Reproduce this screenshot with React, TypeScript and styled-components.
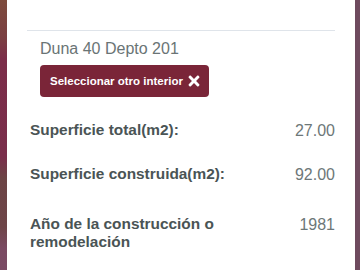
import styled, {createGlobalStyle} from "styled-components";
import {FaTimes} from "react-icons/fa";

type Detail = {
    label: string,
    value: string,
    top: number,
}

const details: Detail[] = [
    {label: "Superficie total(m2):", value: "27.00", top: 24},
    {label: "Superficie construida(m2):", value: "92.00", top: 25},
    {label: "Año de la construcción o remodelación", value: "1981", top: 31},
];

function App() {
    return (
        <>
            <GlobalStyle/>
            <Frame>
                <LeftEdge/>
                <Panel>
                    <Divider/>
                    <Selected>
                        <Address>Duna 40 Depto 201</Address>
                        <ChangeButton type="button">
                            Seleccionar otro interior
                            <FaTimes size={16}/>
                        </ChangeButton>
                    </Selected>
                    <List>
                        {details.map(d =>
                            <Row key={d.label} $top={d.top}>
                                <Label>{d.label}</Label>
                                <Value>{d.value}</Value>
                            </Row>,
                        )}
                    </List>
                </Panel>
                <RightEdge/>
            </Frame>
        </>
    );
}

/* CSS */

const GlobalStyle = createGlobalStyle`
  body {
    margin: 0;
    font-family: "Liberation Sans", Arial, sans-serif;
    background: #ffffff;
  }
`;

const Frame = styled.div`
  display: flex;
  width: 360px;
  height: 270px;
  overflow: hidden;
`;

const LeftEdge = styled.div`
  width: 7px;
  flex-shrink: 0;
  background: linear-gradient(
    to bottom,
    #7e4c3d 0%,
    #7b3f42 14%,
    #7b2d49 22%,
    #7a2e4b 58%,
    #6c4445 66%,
    #6e4548 84%,
    #7a4a62 92%,
    #7a4b64 100%
  );
`;

const RightEdge = styled.div`
  width: 5px;
  flex-shrink: 0;
  background: #6f4a5e;
`;

const Panel = styled.div`
  flex: 1;
  background: #ffffff;
  padding: 30px 20px 0 20px;
  display: flex;
  flex-direction: column;
`;

const Divider = styled.div`
  border-top: 1px solid #dfe4ea;
`;

const Selected = styled.div`
  display: flex;
  flex-direction: column;
  align-items: flex-start;
  padding: 6px 0 0 13px;
`;

const Address = styled.div`
  font-size: 16px;
  line-height: 24px;
  color: #6a7475;
`;

const ChangeButton = styled.button`
  display: flex;
  align-items: center;
  gap: 3px;
  height: 32px;
  margin-top: 4px;
  padding: 0 7px 0 10px;
  border: none;
  border-radius: 4px;
  background: #7a2538;
  color: #ffffff;
  font-family: "Liberation Sans", Arial, sans-serif;
  font-size: 11.5px;
  font-weight: 700;
`;

const List = styled.div`
  display: flex;
  flex-direction: column;
  padding-left: 3px;
`;

const Row = styled.div<{ $top: number }>`
  display: flex;
  justify-content: space-between;
  align-items: flex-start;
  margin-top: ${p => p.$top}px;
`;

const Label = styled.div`
  width: 230px;
  font-size: 15.4px;
  line-height: 18px;
  font-weight: 700;
  color: #4a5455;
`;

const Value = styled.div`
  font-size: 16px;
  line-height: 18px;
  padding-top: 1px;
  color: #6d7778;
`;

/* CSS */

export default App;
